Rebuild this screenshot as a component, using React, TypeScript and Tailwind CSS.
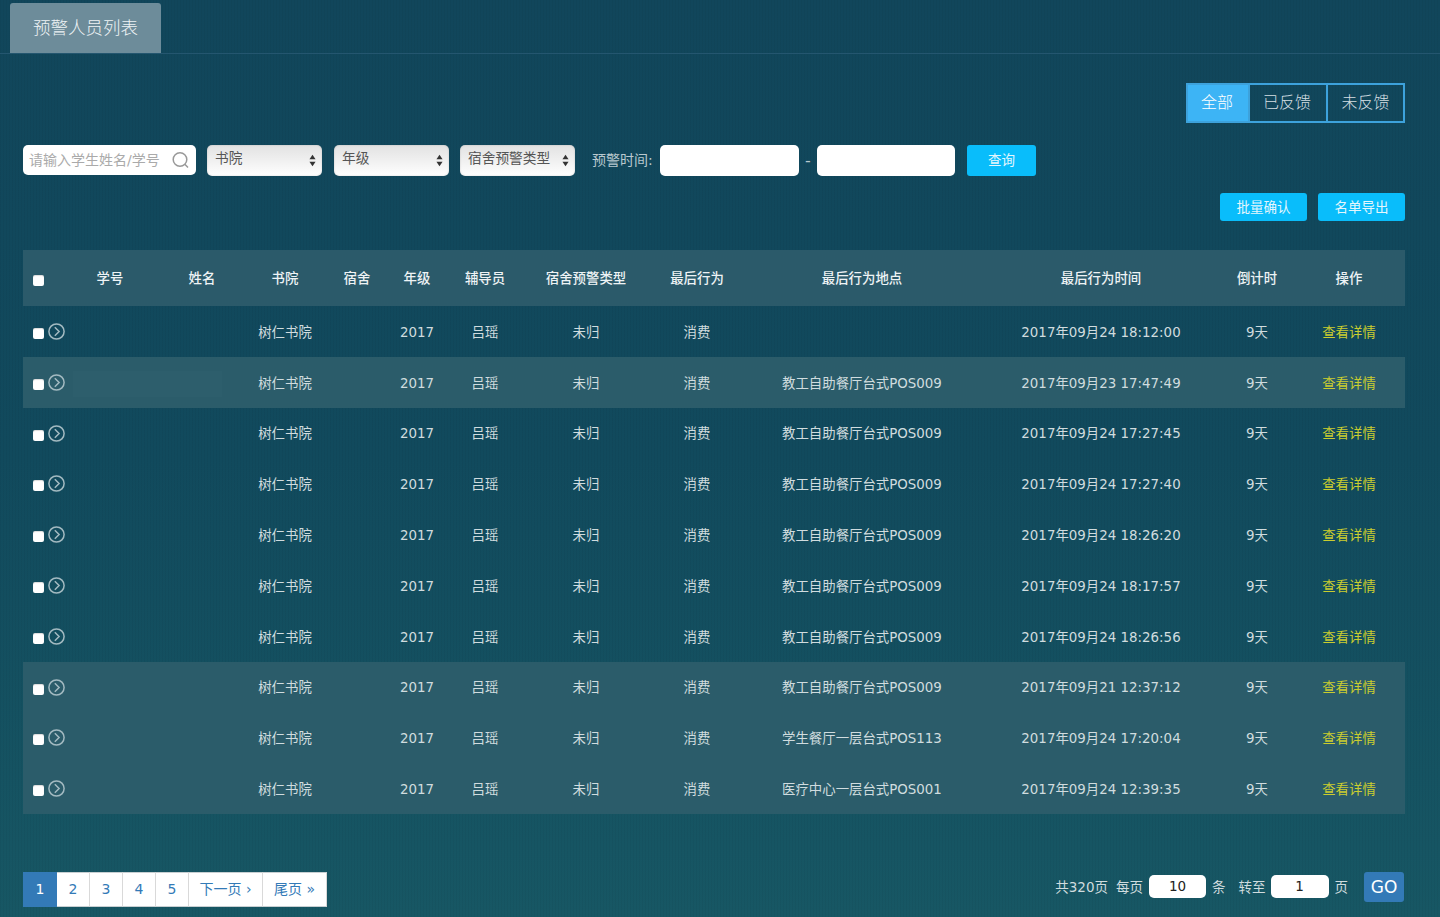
const COLS =
  "grid grid-cols-[34px_106px_78px_88px_56px_64px_72px_130px_92px_238px_240px_72px_112px] items-center";

const HEADERS = ["学号", "姓名", "书院", "宿舍", "年级", "辅导员", "宿舍预警类型", "最后行为", "最后行为地点", "最后行为时间", "倒计时", "操作"];

const POS009 = "教工自助餐厅台式POS009";

const ROWS = [
  { place: "", time: "2017年09月24 18:12:00" },
  { place: POS009, time: "2017年09月23 17:47:49", light: true, mask: true },
  { place: POS009, time: "2017年09月24 17:27:45" },
  { place: POS009, time: "2017年09月24 17:27:40" },
  { place: POS009, time: "2017年09月24 18:26:20" },
  { place: POS009, time: "2017年09月24 18:17:57" },
  { place: POS009, time: "2017年09月24 18:26:56" },
  { place: POS009, time: "2017年09月21 12:37:12", light: true },
  { place: "学生餐厅一层台式POS113", time: "2017年09月24 17:20:04", light: true },
  { place: "医疗中心一层台式POS001", time: "2017年09月24 12:39:35", light: true },
];

function Checkbox() {
  return <span className="block w-[11px] h-[11px] rounded-[2px] bg-white shadow-[inset_0_1px_1px_rgba(0,0,0,0.15)]" />;
}

function ExpandIcon() {
  return (
    <svg viewBox="0 0 17 17" className="w-[17px] h-[17px]" fill="none" stroke="#a3bac1" strokeWidth="1.5">
      <circle cx="8.5" cy="8.5" r="7.6" />
      <path d="M6.8 4.2 11.1 8.5 6.8 12.8" />
    </svg>
  );
}

function SelectBox({ label }: { label: string }) {
  return (
    <div className="w-[115px] h-[31px] flex justify-between rounded-[5px] bg-gradient-to-b from-[#e2e2e2] via-[#f0f0f0] to-white pl-[8px] pr-[6px] text-[#555] shadow-[inset_0_0_2px_rgba(0,0,0,0.2)]">
      <span className="text-[13.7px] leading-[27px]">{label}</span>
      <svg viewBox="0 0 8 14" className="w-[7px] h-[13px] self-center" fill="#333">
        <path d="M4 0.5 7.5 5.5H0.5Z" />
        <path d="M4 13.5 0.5 8.5H7.5Z" />
      </svg>
    </div>
  );
}

function PageLink({ label, width, active }: { label: string; width: string; active?: boolean }) {
  return (
    <span className={`${width} flex items-center justify-center ${active ? "bg-[#337ab7] text-white" : "bg-white text-[#337ab7] border-y border-r border-y-[#c8cfd2] border-r-[#d9d9d9]"}`}>
      {label}
    </span>
  );
}

export default function App() {
  return (
    <div className="min-h-[917px] overflow-hidden bg-[repeating-linear-gradient(90deg,rgba(0,0,0,0.035)_0px,rgba(0,0,0,0.035)_1px,transparent_1px,transparent_3px),linear-gradient(180deg,#11465b_0%,#114a5d_50%,#175764_100%)] text-[#d0dcdf] font-['DejaVu_Sans','Noto_Sans_CJK_SC',sans-serif]">
      {/* 标题 */}
      <div className="h-[54px] pl-[10px] pt-[3px] border-b border-[#24566f]">
        <div className="w-[151px] h-[50px] rounded-t-[3px] bg-[#6d8c9a] text-[#eef3f5] text-[17.5px] font-light leading-[50px] text-center">
          预警人员列表
        </div>
      </div>

      <div className="pl-[23px] pr-[35px]">
        {/* 状态切换 */}
        <div className="flex justify-end pt-[29px]">
          <div className="flex h-[40px] border-2 border-[#3da2dc] text-[16px] font-light leading-[36px] text-center text-[#d5dfe3]">
            <span className="w-[60px] pr-[2px] bg-[#3db4f5] text-white">全部</span>
            <span className="w-[78px] pr-[2px] border-l-2 border-[#3da2dc]">已反馈</span>
            <span className="w-[77px] border-l-2 border-[#3da2dc]">未反馈</span>
          </div>
        </div>

        {/* 查询条件 */}
        <div className="flex items-start mt-[22px] h-[31px]">
          <div className="w-[173px] h-[30px] rounded-[5px] bg-white flex items-center justify-between px-[6px] text-[14px] text-[#aaa]">
            <span>请输入学生姓名/学号</span>
            <svg viewBox="0 0 18 18" className="w-[18px] h-[18px]" fill="none" stroke="#999" strokeWidth="1.5">
              <circle cx="8" cy="8.5" r="6.8" />
              <path d="M12.8 13.3 16 16.5" />
            </svg>
          </div>
          <div className="flex ml-[11px]">
            <SelectBox label="书院" />
            <div className="w-[12px]" />
            <SelectBox label="年级" />
            <div className="w-[11px]" />
            <SelectBox label="宿舍预警类型" />
          </div>
          <span className="ml-[17px] w-[68px] text-[14px] leading-[31px] text-[#b9c9cf] whitespace-nowrap">预警时间:</span>
          <div className="w-[139px] h-[31px] rounded-[5px] bg-white" />
          <span className="w-[18px] text-center leading-[31px] text-[#b9c9cf]">-</span>
          <div className="w-[138px] h-[31px] rounded-[5px] bg-white" />
          <button className="ml-[12px] w-[69px] h-[31px] rounded-[3px] bg-[#09bdfb] text-[#e4f6fd] text-[13.5px]">查询</button>
        </div>

        {/* 批量操作 */}
        <div className="flex justify-end gap-[11px] mt-[17px]">
          <button className="w-[87px] h-[28px] rounded-[3px] bg-[#09bdfb] text-[#e4f6fd] text-[13.5px]">批量确认</button>
          <button className="w-[87px] h-[28px] rounded-[3px] bg-[#09bdfb] text-[#e4f6fd] text-[13.5px]">名单导出</button>
        </div>

        {/* 表格 */}
        <div className="mt-[29px]">
          <div className={`${COLS} h-[56px] pt-[2px] bg-[#2b5a6a] text-[#eef3f5] text-[13.4px] font-medium text-center`}>
            <div className="pl-[10px] pt-[2px]"><Checkbox /></div>
            {HEADERS.map((h) => (
              <div key={h}>{h}</div>
            ))}
          </div>
          {ROWS.map((row) => (
            <div key={row.time} className={`${COLS} h-[50.8px] pt-[3px] text-[13.4px] text-center ${row.light ? "bg-[#2b5c6a]" : ""}`}>
              <div className="relative h-full">
                <span className="absolute left-[10px] top-[19px]"><Checkbox /></span>
                <span className="absolute left-[25px] top-[14px]"><ExpandIcon /></span>
              </div>
              <div className="col-span-2 pl-[16px]">
                {row.mask && <div className="w-[149px] h-[26px] bg-[#2d5e6c]" />}
              </div>
              <div>树仁书院</div>
              <div />
              <div>2017</div>
              <div>吕瑶</div>
              <div>未归</div>
              <div>消费</div>
              <div>{row.place}</div>
              <div>{row.time}</div>
              <div>9天</div>
              <div className="text-[#cacd2f]">查看详情</div>
            </div>
          ))}
        </div>

        {/* 分页 */}
        <div className="flex justify-between items-start mt-[58px] pr-px">
          <div className="flex h-[35px] text-[14px]">
            <PageLink label="1" width="w-[34px]" active />
            <PageLink label="2" width="w-[33px]" />
            <PageLink label="3" width="w-[33px]" />
            <PageLink label="4" width="w-[33px]" />
            <PageLink label="5" width="w-[33px]" />
            <PageLink label="下一页 ›" width="w-[74px]" />
            <PageLink label="尾页 »" width="w-[64px]" />
          </div>
          <div className="flex items-center text-[13.5px] h-[30px]">
            <span>共320页</span>
            <span className="ml-[8px]">每页</span>
            <span className="ml-[6px] w-[57px] h-[23px] rounded-[5px] bg-white text-[#222] text-center leading-[23px]">10</span>
            <span className="ml-[6px]">条</span>
            <span className="ml-[13px]">转至</span>
            <span className="ml-[5px] w-[58px] h-[23px] rounded-[5px] bg-white text-[#222] text-center leading-[23px]">1</span>
            <span className="ml-[6px]">页</span>
            <span className="ml-[16px] w-[40px] h-[30px] rounded-[3px] bg-[#337ab7] text-white text-[17px] leading-[30px] text-center">GO</span>
          </div>
        </div>
      </div>
    </div>
  );
}
